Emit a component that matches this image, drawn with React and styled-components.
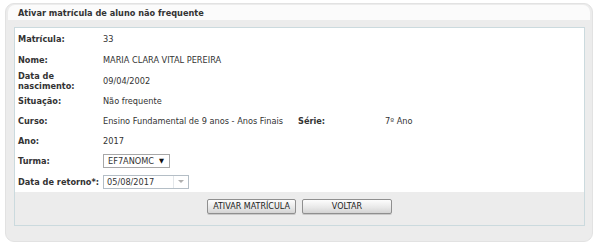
import React from "react";
import styled, { createGlobalStyle } from "styled-components";

const GlobalStyle = createGlobalStyle`
  body {
    margin: 0;
    background: #fff;
    font-family: "DejaVu Sans", Verdana, sans-serif;
  }
`;

const Page = styled.div`
  padding: 3px 7px 0 5px;
`;

const Panel = styled.div`
  background: #ececec;
  border: 1px solid #e2e2e2;
  border-radius: 9px;
  padding: 1px 2px 15px;
`;

const Header = styled.div`
  background: #fbfbfb;
  border-radius: 7px 7px 0 0;
  height: 15px;
  display: flex;
  align-items: center;
  padding-left: 10px;
  font-size: 8.2px;
  font-weight: bold;
  color: #333;
`;

const Body = styled.div`
  margin: 7px 5px 0 6px;
  background: #fff;
  border: 1px solid #cbdade;
`;

const Rows = styled.div`
  padding: 1px 0 0 3px;
`;

const Row = styled.div`
  display: grid;
  grid-template-columns: 85px 195px 87px 1fr;
  align-items: center;
  height: ${(p) => p.$h || 20}px;
  font-size: 8.2px;
  color: #333;
`;

const Label = styled.div`
  font-weight: bold;
  line-height: 10px;
`;

const Value = styled.div`
  line-height: 10px;
`;

const Select = styled.div`
  display: inline-flex;
  align-items: center;
  gap: 5px;
  height: 12px;
  padding: 0 5px 0 4px;
  border: 1px solid #a7a7a7;
  background: #fff;
  font-size: 8.2px;
  color: #333;
  width: max-content;
`;

const Arrow = styled.span`
  font-size: 6.5px;
  color: #111;
`;

const DateBox = styled.div`
  display: inline-flex;
  width: 84px;
  height: 12px;
  border: 1px solid #b4bec6;
  background: #fff;
`;

const DateText = styled.div`
  flex: 1;
  padding-left: 3px;
  font-size: 8.2px;
  line-height: 12px;
  color: #333;
`;

const DateButton = styled.div`
  width: 14px;
  border-left: 1px solid #e3e7ea;
  display: flex;
  align-items: center;
  justify-content: center;
  &::after {
    content: "";
    border-left: 3px solid transparent;
    border-right: 3px solid transparent;
    border-top: 3px solid #b0b0b0;
  }
`;

const Footer = styled.div`
  background: #ececec;
  height: 33px;
  margin-top: 0;
  display: flex;
  justify-content: center;
  align-items: flex-start;
  gap: 6px;
  padding-top: 7px;
  box-sizing: border-box;
`;

const Button = styled.button`
  height: 15px;
  width: ${(p) => p.$w}px;
  padding: 0;
  border: 1px solid #8f8f8f;
  border-radius: 2px;
  background: linear-gradient(#fdfdfd, #e9e9e9 55%, #d4d4d4);
  box-shadow: 0 1px 0 #c9c9c9;
  font-family: "DejaVu Sans", Verdana, sans-serif;
  font-size: 8px;
  color: #222;
  line-height: 13px;
`;

export default function App() {
  return (
    <Page>
      <GlobalStyle />
      <Panel>
        <Header>Ativar matrícula de aluno não frequente</Header>
        <Body>
          <Rows>
            <Row>
              <Label>Matrícula:</Label>
              <Value>33</Value>
            </Row>
            <Row $h={21}>
              <Label>Nome:</Label>
              <Value>MARIA CLARA VITAL PEREIRA</Value>
            </Row>
            <Row $h={21}>
              <Label>Data de nascimento:</Label>
              <Value>09/04/2002</Value>
            </Row>
            <Row>
              <Label>Situação:</Label>
              <Value>Não frequente</Value>
            </Row>
            <Row>
              <Label>Curso:</Label>
              <Value>Ensino Fundamental de 9 anos - Anos Finais</Value>
              <Label>Série:</Label>
              <Value>7º Ano</Value>
            </Row>
            <Row>
              <Label>Ano:</Label>
              <Value>2017</Value>
            </Row>
            <Row>
              <Label>Turma:</Label>
              <Select>
                EF7ANOMC <Arrow>▼</Arrow>
              </Select>
            </Row>
            <Row $h={21}>
              <Label>Data de retorno*:</Label>
              <DateBox>
                <DateText>05/08/2017</DateText>
                <DateButton />
              </DateBox>
            </Row>
          </Rows>
          <Footer>
            <Button $w={89}>ATIVAR MATRÍCULA</Button>
            <Button $w={90}>VOLTAR</Button>
          </Footer>
        </Body>
      </Panel>
    </Page>
  );
}
